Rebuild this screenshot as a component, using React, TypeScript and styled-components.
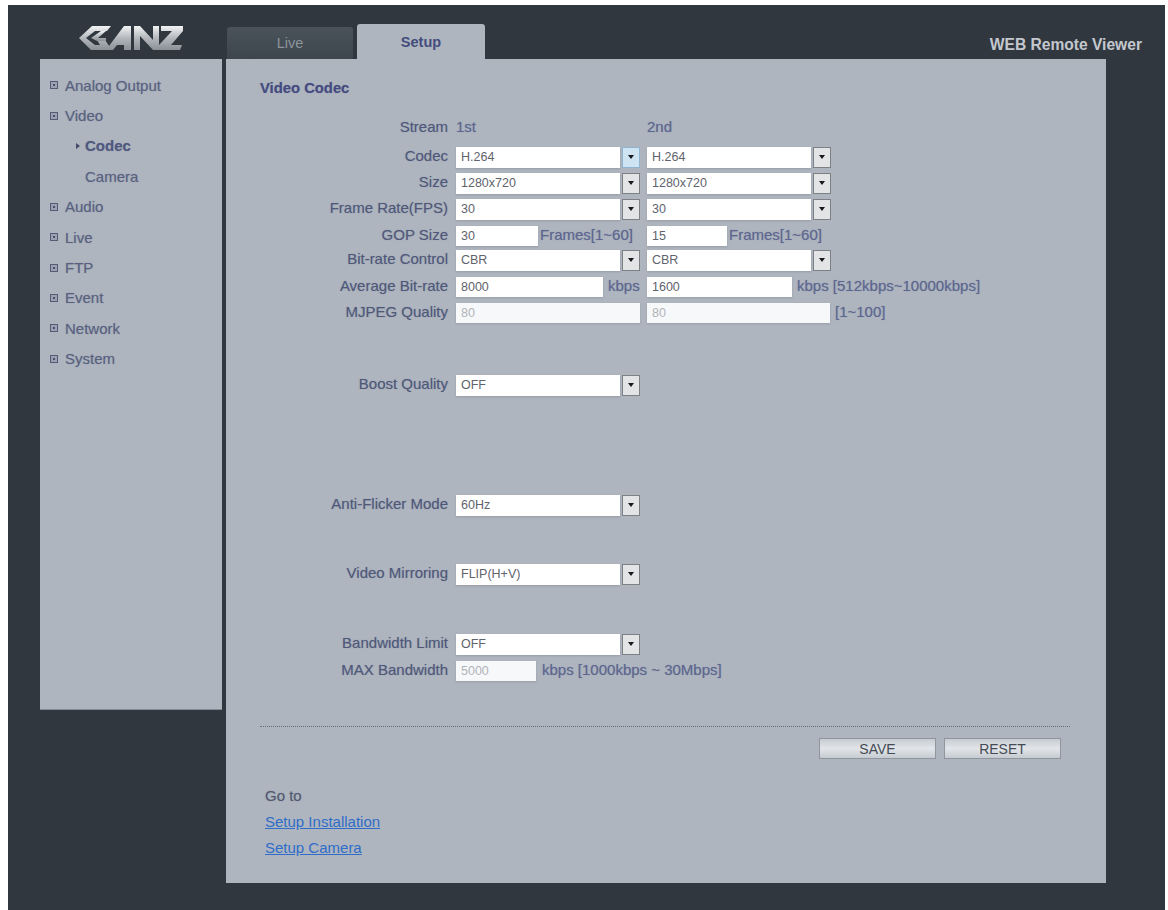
import styled, { createGlobalStyle } from "styled-components"

const GlobalStyle = createGlobalStyle`
  html, body {
    margin: 0;
    padding: 0;
    background: #fff;
  }
  * {
    box-sizing: border-box;
  }
`

const Page = styled.div`
  width: 1168px;
  height: 910px;
  padding: 5px 3px 0 8px;
  overflow: hidden;
  font-family: "Liberation Sans", Arial, sans-serif;
  font-size: 15px;
  color: #505879;
  text-shadow: 0 0 1px rgba(80, 88, 125, 0.45);
`

const Frame = styled.div`
  height: 905px;
  background: #31373f;
  display: flex;
  flex-direction: column;
`

const Header = styled.header`
  height: 54px;
  display: flex;
  align-items: flex-end;
`

const LogoSlot = styled.div`
  width: 219px;
  height: 54px;
  padding: 21px 0 0 71px;
`

const Tab = styled.div<{ $active?: boolean }>`
  width: ${props => (props.$active ? 128 : 126)}px;
  height: ${props => (props.$active ? 35 : 32)}px;
  margin-right: 4px;
  border-radius: 3px 3px 0 0;
  display: flex;
  align-items: center;
  justify-content: center;
  font-size: 14.5px;
  font-weight: ${props => (props.$active ? "bold" : "normal")};
  color: ${props => (props.$active ? "#434c7c" : "#8d949c")};
  background: ${props => (props.$active ? "#aeb5bf" : "linear-gradient(#4a525a, #3d454d)")};
  text-shadow: none;
`

const ViewerTitle = styled.div`
  margin-left: auto;
  margin-right: 23px;
  padding-bottom: 5px;
  font-size: 15.6px;
  font-weight: bold;
  color: #c4c8ce;
  text-shadow: none;
`

const Body = styled.div`
  display: flex;
  align-items: flex-start;
  padding-left: 32px;
`

const Sidebar = styled.nav`
  width: 182px;
  height: 651px;
  padding: 11px 0 0 10px;
  background: #aeb5bf;
  border-bottom: 1px solid #848b95;
`

const MenuItem = styled.div<{ $sub?: boolean; $current?: boolean }>`
  height: 30.4px;
  display: flex;
  align-items: center;
  gap: 7px;
  padding-left: ${props => (props.$sub ? 27 : 0)}px;
  font-size: 15px;
  font-weight: ${props => (props.$current ? "bold" : "normal")};
  color: ${props => (props.$current ? "#50587f" : "#59617f")};
`

const Bullet = styled.span`
  width: 8px;
  height: 8px;
  display: flex;
  align-items: center;
  justify-content: center;
  border: 1px solid #555b75;
  background: #9aa1b3;
  &::after {
    content: "";
    width: 2px;
    height: 2px;
    background: #4b5168;
  }
`

const Pointer = styled.span<{ $hidden?: boolean }>`
  width: 0;
  height: 0;
  margin-left: -1px;
  margin-right: -2px;
  border-left: 4px solid ${props => (props.$hidden ? "transparent" : "#444b68")};
  border-top: 3px solid transparent;
  border-bottom: 3px solid transparent;
`

const Main = styled.main`
  width: 880px;
  height: 824px;
  margin-left: 4px;
  background: #aeb5bf;
`

const Title = styled.h1`
  margin: 0;
  padding: 21px 0 0 34px;
  height: 56px;
  font-size: 14.8px;
  font-weight: bold;
  color: #444a80;
`

const Form = styled.div`
  display: flex;
  flex-direction: column;
`

const Row = styled.div<{ $mt?: number }>`
  height: 26px;
  margin-top: ${props => props.$mt ?? 0}px;
  display: grid;
  grid-template-columns: 223px 184px 183px auto;
  column-gap: 7px;
  align-items: center;
`

const Label = styled.div`
  padding-right: 1px;
  text-align: right;
  font-size: 15px;
  white-space: nowrap;
  margin-top: -3px;
`

const Cell = styled.div`
  display: flex;
  align-items: center;
  white-space: nowrap;
`

const Note = styled.span<{ $gap?: number }>`
  margin-left: ${props => props.$gap ?? 2}px;
  margin-top: -3px;
  font-size: 15px;
  color: #5d6690;
`

const SelectField = styled.div`
  width: 184px;
  height: 21px;
  display: flex;
  align-items: center;
  font-size: 12.5px;
  color: #5f636c;
  text-shadow: none;
`

const SelectValue = styled.div`
  width: 164px;
  height: 21px;
  padding-left: 5px;
  line-height: 21px;
  background: #fff;
  box-shadow: 0 1px 2px #979da6;
`

const ArrowButton = styled.div<{ $focus?: boolean }>`
  width: 18px;
  height: 21px;
  margin-left: 2px;
  display: flex;
  align-items: center;
  justify-content: center;
  border: 1px solid ${props => (props.$focus ? "#8fb4cf" : "#7d8186")};
  background: ${props => (props.$focus ? "#cfe4f3" : "#e2e4e6")};
  &::after {
    content: "";
    border-top: 4px solid #17191c;
    border-left: 3.5px solid transparent;
    border-right: 3.5px solid transparent;
  }
`

const TextInput = styled.input<{ $w: number }>`
  width: ${props => props.$w}px;
  height: 20px;
  flex-shrink: 0;
  padding: 0 0 0 5px;
  border: 0;
  outline: 0;
  font-family: inherit;
  font-size: 12.5px;
  color: #5f636c;
  background: #fff;
  box-shadow: 0 1px 2px #979da6;
  &:disabled {
    color: #b0b4ba;
    background: #f7f8f9;
  }
`

const Rule = styled.div`
  margin: 42px 36px 0 34px;
  border-top: 1px dotted #666c74;
`

const Buttons = styled.div`
  display: flex;
  justify-content: flex-end;
  gap: 8px;
  padding: 11px 45px 0 0;
`

const Button = styled.button`
  width: 117px;
  height: 21px;
  padding: 0;
  border: 1px solid #8f969e;
  font-family: inherit;
  font-size: 14px;
  color: #454b55;
  background: linear-gradient(#c6ccd2, #e2e5e8 50%, #c5cbd1);
`

const GoTo = styled.div`
  display: flex;
  flex-direction: column;
  gap: 9px;
  padding: 28px 0 0 39px;
  font-size: 15px;
  line-height: 17px;
`

const GoToLabel = styled.span`
  color: #53596f;
`

const GoToLink = styled.a`
  color: #2f6dc8;
  text-decoration: underline;
  text-shadow: none;
`

function Logo() {
  return (
    <svg width="104" height="25" viewBox="0 0 104 25">
      <defs>
        <linearGradient id="silver" x1="0" y1="0" x2="0" y2="1">
          <stop offset="0" stopColor="#f2f3f4" />
          <stop offset="0.5" stopColor="#b4b8bd" />
          <stop offset="1" stopColor="#8b9096" />
        </linearGradient>
      </defs>
      <g fill="url(#silver)">
        <polygon points="13,0 32,0 28,5 16,5 7,12 16,19 21,19 18,14 26,14 33,24 12,24 0,12" />
        <polygon points="12,12 22,5 27,5 19,12 27,12 27,15 18,15" />
        <polygon points="27,24 45,0 52,0 52,24 45,24 45,19 38,19 34,24" />
        <polygon points="55,24 55,0 61,0 74,14 74,0 80,0 80,24 74,24 61,10 61,24" />
        <polygon points="82,0 104,0 104,5 92,19 103,19 101,24 80,24 80,19 93,5 82,5" />
      </g>
    </svg>
  )
}

function Select({ value, focus }: { value: string; focus?: boolean }) {
  return (
    <SelectField>
      <SelectValue>{value}</SelectValue>
      <ArrowButton $focus={focus} />
    </SelectField>
  )
}

const menu = [
  { name: "Analog Output" },
  { name: "Video" },
  { name: "Codec", sub: true, current: true },
  { name: "Camera", sub: true },
  { name: "Audio" },
  { name: "Live" },
  { name: "FTP" },
  { name: "Event" },
  { name: "Network" },
  { name: "System" },
]

function App() {
  return (
    <Page>
      <GlobalStyle />
      <Frame>
        <Header>
          <LogoSlot>
            <Logo />
          </LogoSlot>
          <Tab>Live</Tab>
          <Tab $active>Setup</Tab>
          <ViewerTitle>WEB Remote Viewer</ViewerTitle>
        </Header>
        <Body>
          <Sidebar>
            {menu.map(item => (
              <MenuItem key={item.name} $sub={item.sub} $current={item.current}>
                {item.sub ? <Pointer $hidden={!item.current} /> : <Bullet />}
                {item.name}
              </MenuItem>
            ))}
          </Sidebar>
          <Main>
            <Title>Video Codec</Title>
            <Form>
              <Row>
                <Label>Stream</Label>
                <Cell><Note $gap={0}>1st</Note></Cell>
                <Cell><Note $gap={0}>2nd</Note></Cell>
              </Row>
              <Row $mt={3}>
                <Label>Codec</Label>
                <Select value="H.264" focus />
                <Select value="H.264" />
              </Row>
              <Row>
                <Label>Size</Label>
                <Select value="1280x720" />
                <Select value="1280x720" />
              </Row>
              <Row>
                <Label>Frame Rate(FPS)</Label>
                <Select value="30" />
                <Select value="30" />
              </Row>
              <Row $mt={1}>
                <Label>GOP Size</Label>
                <Cell>
                  <TextInput $w={82} defaultValue="30" />
                  <Note>Frames[1~60]</Note>
                </Cell>
                <Cell>
                  <TextInput $w={80} defaultValue="15" />
                  <Note>Frames[1~60]</Note>
                </Cell>
              </Row>
              <Row $mt={-2}>
                <Label>Bit-rate Control</Label>
                <Select value="CBR" />
                <Select value="CBR" />
              </Row>
              <Row $mt={1}>
                <Label>Average Bit-rate</Label>
                <Cell>
                  <TextInput $w={147} defaultValue="8000" />
                  <Note $gap={5}>kbps</Note>
                </Cell>
                <Cell>
                  <TextInput $w={145} defaultValue="1600" />
                  <Note $gap={5}>kbps [512kbps~10000kbps]</Note>
                </Cell>
              </Row>
              <Row>
                <Label>MJPEG Quality</Label>
                <Cell><TextInput $w={184} defaultValue="80" disabled /></Cell>
                <Cell>
                  <TextInput $w={183} defaultValue="80" disabled />
                  <Note $gap={5}>[1~100]</Note>
                </Cell>
              </Row>
              <Row $mt={46}>
                <Label>Boost Quality</Label>
                <Select value="OFF" />
              </Row>
              <Row $mt={94}>
                <Label>Anti-Flicker Mode</Label>
                <Select value="60Hz" />
              </Row>
              <Row $mt={43}>
                <Label>Video Mirroring</Label>
                <Select value="FLIP(H+V)" />
              </Row>
              <Row $mt={44}>
                <Label>Bandwidth Limit</Label>
                <Select value="OFF" />
              </Row>
              <Row $mt={1}>
                <Label>MAX Bandwidth</Label>
                <Cell>
                  <TextInput $w={80} defaultValue="5000" disabled />
                  <Note $gap={6}>kbps [1000kbps ~ 30Mbps]</Note>
                </Cell>
              </Row>
            </Form>
            <Rule />
            <Buttons>
              <Button>SAVE</Button>
              <Button>RESET</Button>
            </Buttons>
            <GoTo>
              <GoToLabel>Go to</GoToLabel>
              <GoToLink href="#">Setup Installation</GoToLink>
              <GoToLink href="#">Setup Camera</GoToLink>
            </GoTo>
          </Main>
        </Body>
      </Frame>
    </Page>
  )
}

export default App
